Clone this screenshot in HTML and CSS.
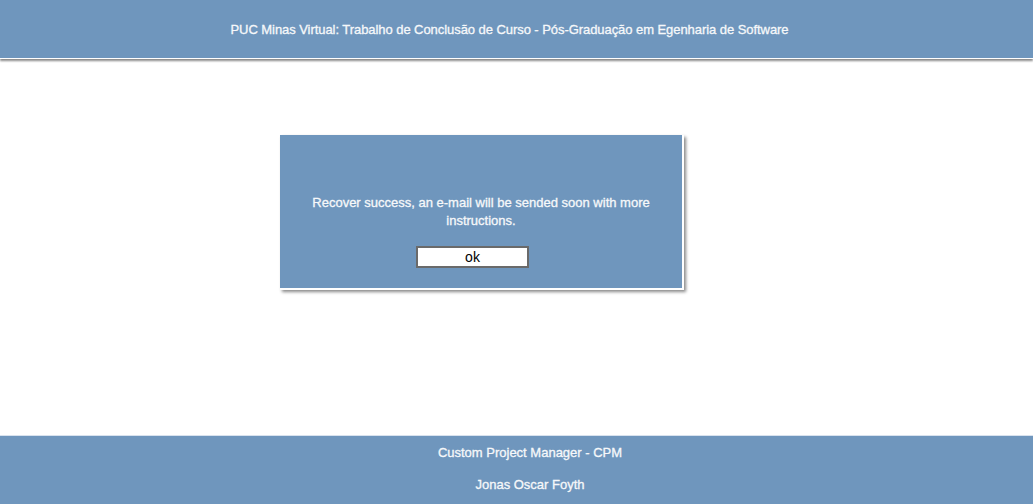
FILE: index.html
```html
<!DOCTYPE html>
<html>
<head>
<meta charset="utf-8">
<link rel="stylesheet" href="styles.css">
</head>
<body>
<div class="page">
  <header class="header">PUC Minas Virtual: Trabalho de Conclusão de Curso - Pós-Graduação em Egenharia de Software</header>
  <main class="main">
    <div class="dialog">
      <p class="message">Recover success, an e-mail will be sended soon with more instructions.</p>
      <button class="ok">ok</button>
    </div>
  </main>
  <footer class="footer">
    <div class="footer-line">Custom Project Manager - CPM</div>
    <div class="footer-line">Jonas Oscar Foyth</div>
  </footer>
</div>
</body>
</html>
```
FILE: styles.css
```css
html, body {
  margin: 0;
  padding: 0;
  background: #ffffff;
}
body {
  font-family: "Liberation Sans", Arial, sans-serif;
}
.page {
  display: flex;
  flex-direction: column;
  min-height: 100vh;
}
.header {
  height: 58px;
  padding-right: 14px;
  background: #6f96bd;
  color: #f6f8fa;
  font-size: 13px;
  letter-spacing: -0.06px;
  -webkit-text-stroke: 0.3px #f6f8fa;
  display: flex;
  align-items: center;
  justify-content: center;
  border-bottom: 1px solid #ffffff;
  box-shadow: 0 2px 2px #8a8a8a;
}
.main {
  flex: 1;
  padding: 76px 0 0 280px;
}
.dialog {
  width: 402px;
  background: #6f96bd;
  border-right: 2px solid #ffffff;
  border-bottom: 2px solid #ffffff;
  box-shadow: 2px 2px 3px #8a8a8a;
  padding: 59px 0 20px 0;
  display: flex;
  flex-direction: column;
  align-items: center;
}
.message {
  margin: 0 20px;
  text-align: center;
  color: #f6f8fa;
  font-size: 13px;
  -webkit-text-stroke: 0.3px #f6f8fa;
  line-height: 18px;
}
.ok {
  margin-top: 16px;
  align-self: flex-start;
  margin-left: 136px;
  width: 113px;
  height: 22px;
  background: #ffffff;
  border: 2px solid #6a6a6a;
  font-family: "Liberation Sans", Arial, sans-serif;
  font-size: 14px;
  color: #000000;
  padding: 0;
}
.footer {
  background: #6f96bd;
  border-top: 1px solid #d8e2ee;
  height: 69px;
  display: flex;
  flex-direction: column;
  align-items: center;
  padding-top: 9px;
  padding-left: 27px;
  box-sizing: border-box;
  color: #f6f8fa;
  font-size: 13px;
  -webkit-text-stroke: 0.3px #f6f8fa;
}
.footer-line {
  line-height: 16px;
  margin-bottom: 16px;
}
```
